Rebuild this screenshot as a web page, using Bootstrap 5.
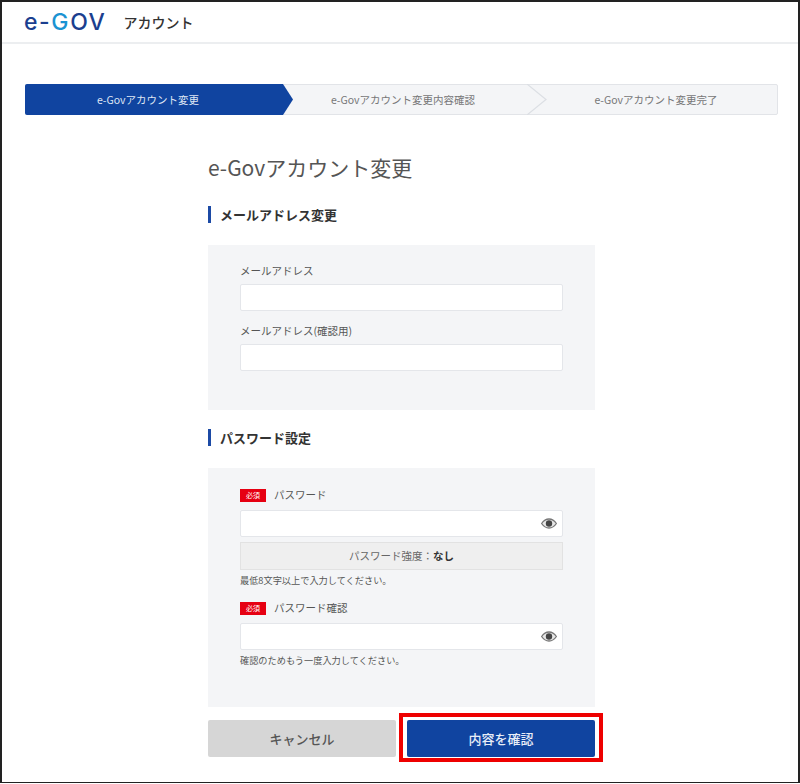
<!DOCTYPE html>
<html lang="ja">
<head>
<meta charset="utf-8">
<title>e-Govアカウント変更</title>
<link href="https://cdn.jsdelivr.net/npm/bootstrap@5.3.0/dist/css/bootstrap.min.css" rel="stylesheet">
<style>
html,body{margin:0;background:#fff;overflow:hidden}
body{font-family:"Noto Sans CJK JP","Liberation Sans",sans-serif;color:#555;font-size:11px}
.frame{width:800px;height:783px;border:solid #222;border-width:2px 2px 1px 2px;background:#fff}
.site-head{height:42px;border-bottom:2px solid #eceef0;padding-left:22px;gap:17px}
.logo-mark{font-family:Inter,"Liberation Sans",sans-serif;font-weight:500;font-size:23px;letter-spacing:1.600px;color:#1b3f8f;line-height:1}
.logo-mark span{color:#1b93d2}
.logo-sub{font-size:14px;font-weight:500;color:#333;line-height:1}
.stepper{margin:40px 20px 0 23px;height:31px;background:#f4f5f7;border:1px solid #e2e4e8;border-radius:2px;font-size:10.500px;color:#777}
.step-one{width:268px;margin:-1px 0 -1px -1px;background:#1044a0;color:#dfe6f4;clip-path:polygon(0 0,258px 0,100% 50%,258px 100%,0 100%);border-radius:2px 0 0 2px;padding-right:22px}
.step-two{width:234px;padding-right:14px}
.step-three{flex:1 1 0;padding-right:12px}
.chev{width:20px;height:31px;margin-top:-1px;flex:none}
.form-col{width:387px;margin:37px 0 0 206px}
.page-title{font-size:21px;font-weight:400;color:#555;line-height:30px;margin:0}
.sec-title{font-size:13px;font-weight:700;color:#333;border-left:3px solid #1c4aa5;padding-left:9px;line-height:17px;margin:0}
.first-sec{margin-top:24px}
.panel-box{background:#f4f5f7;margin-top:22px;padding:18px 32px 0}
.panel-a{height:165px;margin-bottom:19px}
.panel-b{height:239px;padding-top:19px}
.fld-label{font-size:10.500px;color:#555;line-height:16px;margin:0 0 5px}
.panel-b .fld-label{margin-bottom:7px}
.fld-gap{margin-top:12px}
.fld-input{height:27px;border:1px solid #e4e6ea;border-radius:2px;background:#fff;padding:0 5px}
.req-tag{width:26px;height:13px;background:#e60012;color:#fff;font-size:7px;line-height:13px;text-align:center;margin-right:8px;flex:none}
.strength{height:28px;background:#efefef;border:1px solid #e2e2e2;margin-top:5px;font-size:10.500px;color:#666}
.strength b{color:#333}
.hint{font-size:9.200px;line-height:12px;color:#555;margin:4px 0 0}
.after-hint{margin-top:14px}
.btn-row{margin-top:13px;gap:11px}
.act-cancel,.act-ok{width:188px;height:37px;font-size:13px;font-weight:500;border-radius:2px;border:0;padding:0}
.act-cancel{background:#d6d6d6;color:#555}
.act-ok{background:#1044a0;color:#e8edf7}
.act-ok::after{content:"";position:absolute;left:-8px;right:-8px;top:-7px;bottom:-5px;border:4px solid #ee0000;pointer-events:none}
</style>
</head>
<body>
<div class="frame">
  <header class="site-head d-flex align-items-center">
    <span class="logo-mark">e-<span>G</span>OV</span>
    <span class="logo-sub">アカウント</span>
  </header>
  <div class="stepper d-flex">
    <div class="step-one d-flex align-items-center justify-content-center">e-Govアカウント変更</div>
    <div class="step-two d-flex align-items-center justify-content-center">e-Govアカウント変更内容確認</div>
    <svg class="chev" viewBox="0 0 20 31" aria-hidden="true"><path d="M0 0 L19 15.5 L0 31" fill="none" stroke="#dcdfe4" stroke-width="1.2"/></svg>
    <div class="step-three d-flex align-items-center justify-content-center">e-Govアカウント変更完了</div>
  </div>
  <main class="form-col">
    <h1 class="page-title">e-Govアカウント変更</h1>
    <h2 class="sec-title first-sec">メールアドレス変更</h2>
    <section class="panel-box panel-a">
      <p class="fld-label">メールアドレス</p>
      <div class="fld-input"></div>
      <p class="fld-label fld-gap">メールアドレス(確認用)</p>
      <div class="fld-input"></div>
    </section>
    <h2 class="sec-title">パスワード設定</h2>
    <section class="panel-box panel-b">
      <div class="fld-label d-flex align-items-center"><span class="req-tag">必須</span>パスワード</div>
      <div class="fld-input d-flex align-items-center justify-content-end">
        <svg width="16" height="11" viewBox="0 0 16 11" aria-hidden="true"><path d="M.6 5.5C3 2 5.500 1 8 1s5 1 7.400 4.500C13 9 10.500 10 8 10S3 9 .6 5.500Z" fill="#e8e8e8" stroke="#777" stroke-width="1.300"/><circle cx="8" cy="5.500" r="3.200" fill="#444"/></svg>
      </div>
      <div class="strength d-flex align-items-center justify-content-center"><span>パスワード強度：<b>なし</b></span></div>
      <p class="hint">最低8文字以上で入力してください。</p>
      <div class="fld-label d-flex align-items-center after-hint"><span class="req-tag">必須</span>パスワード確認</div>
      <div class="fld-input d-flex align-items-center justify-content-end">
        <svg width="16" height="11" viewBox="0 0 16 11" aria-hidden="true"><path d="M.6 5.5C3 2 5.500 1 8 1s5 1 7.400 4.500C13 9 10.500 10 8 10S3 9 .6 5.500Z" fill="#e8e8e8" stroke="#777" stroke-width="1.300"/><circle cx="8" cy="5.500" r="3.200" fill="#444"/></svg>
      </div>
      <p class="hint">確認のためもう一度入力してください。</p>
    </section>
    <div class="btn-row d-flex">
      <button type="button" class="btn act-cancel">キャンセル</button>
      <button type="button" class="btn act-ok position-relative">内容を確認</button>
    </div>
  </main>
</div>
<script src="https://cdn.jsdelivr.net/npm/bootstrap@5.3.0/dist/js/bootstrap.bundle.min.js"></script>
</body>
</html>
